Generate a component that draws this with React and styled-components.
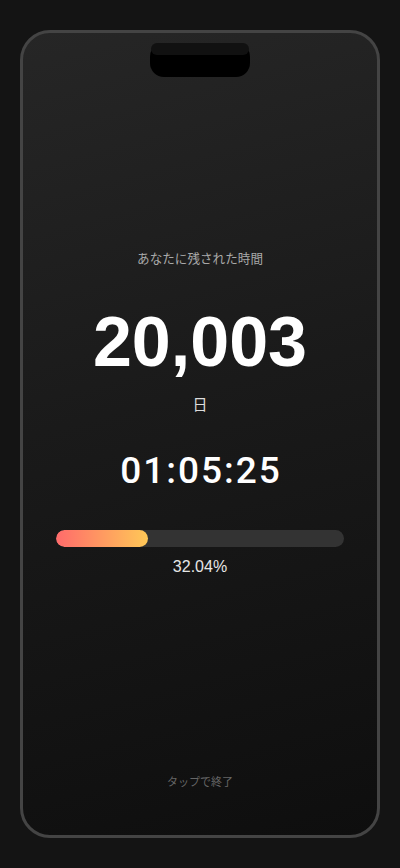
import styled, { createGlobalStyle } from "styled-components"

const GlobalStyle = createGlobalStyle`
    * {
        box-sizing: border-box;
    }

    html, body {
        margin: 0;
        padding: 0;
        background-color: #141414;
        font-family: "Liberation Sans", "Noto Sans CJK JP", sans-serif;
    }
`

const Page = styled.div`
    width: 400px;
    height: 868px;
    padding: 30px 20px;
`

const Phone = styled.div`
    position: relative;
    height: 100%;
    display: flex;
    flex-direction: column;
    align-items: center;
    border: 3px solid #444444;
    border-radius: 30px;
    background: linear-gradient(165deg, #262626 0%, #1a1a1a 45%, #0e0e0e 100%);
    overflow: hidden;
`

const Notch = styled.div`
    position: absolute;
    top: 10px;
    left: 50%;
    width: 100px;
    height: 34px;
    margin-left: -50px;
    background-color: #000000;
    border-radius: 14px;

    &::before {
        content: "";
        position: absolute;
        top: 0;
        left: 1px;
        right: 1px;
        height: 12px;
        background-color: #111111;
        border-radius: 6px;
    }
`

const Label = styled.div`
    margin-top: 215px;
    height: 20px;
    line-height: 20px;
    font-size: 12.6px;
    color: #a8a8a8;
    font-family: "Noto Sans CJK JP", sans-serif;
`

const Days = styled.div`
    margin-top: 34px;
    height: 80px;
    line-height: 80px;
    font-size: 70px;
    font-weight: 700;
    color: #ffffff;
`

const Unit = styled.div`
    margin-top: 12px;
    height: 20px;
    line-height: 20px;
    font-size: 15px;
    color: #dddddd;
    font-family: "Noto Sans CJK JP", sans-serif;
`

const Clock = styled.div`
    margin-top: 32px;
    height: 50px;
    line-height: 50px;
    font-family: Roboto, sans-serif;
    font-size: 37px;
    font-weight: 500;
    letter-spacing: 2px;
    padding-left: 2px;
    color: #ffffff;
`

const Track = styled.div`
    margin-top: 34px;
    width: 288px;
    height: 17px;
    border-radius: 9px;
    background-color: #333333;
    overflow: hidden;
`

const Fill = styled.div`
    height: 100%;
    border-radius: 9px;
    background: linear-gradient(90deg, #ff6b6b 0%, #ffc857 100%);
`

const Percent = styled.div`
    margin-top: 10px;
    height: 20px;
    line-height: 20px;
    font-size: 16px;
    color: #e6e6e6;
`

const Footer = styled.div`
    margin-top: auto;
    margin-bottom: 46px;
    height: 16px;
    line-height: 16px;
    font-size: 11px;
    color: #666666;
    font-family: "Noto Sans CJK JP", sans-serif;
`

const progress = 32.04

export default function App() {
    return (
        <Page>
            <GlobalStyle />
            <Phone>
                <Notch />
                <Label>あなたに残された時間</Label>
                <Days>20,003</Days>
                <Unit>日</Unit>
                <Clock>01:05:25</Clock>
                <Track>
                    <Fill style={{ width: `${progress}%` }} />
                </Track>
                <Percent>{progress.toFixed(2)}%</Percent>
                <Footer>タップで終了</Footer>
            </Phone>
        </Page>
    )
}
